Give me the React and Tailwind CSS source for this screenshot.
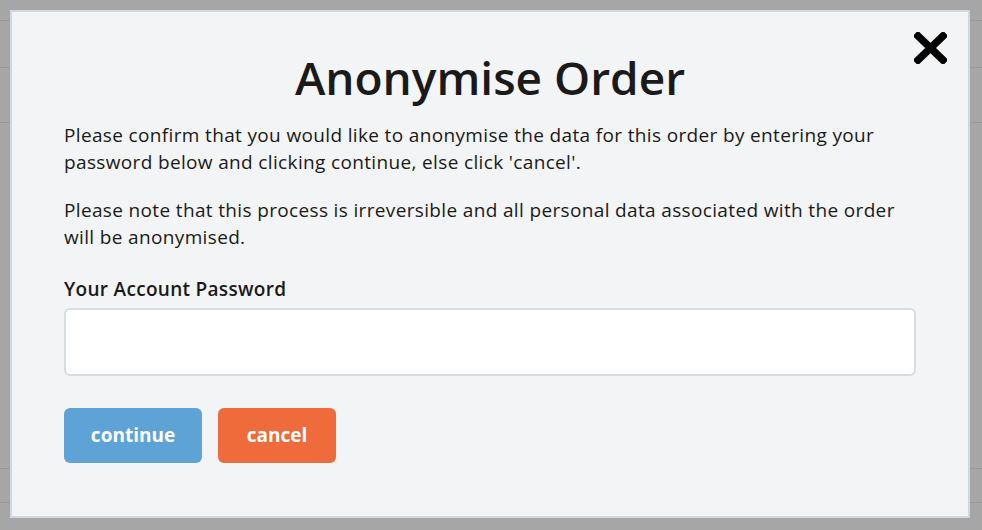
export default function App() {
  const font = { fontFamily: "'Open Sans', 'Noto Sans', sans-serif" };
  return (
    <div className="relative w-[982px] h-[530px] overflow-hidden bg-[#a6a6a6]" style={font}>
      <div className="flex flex-col">
        <div className="h-[21px] border-b border-[#999999]" />
        <div className="h-[47px] border-b border-[#999999]" />
        <div className="h-[55px] border-b border-[#999999]" />
        <div className="h-[346px] border-b border-[#999999]" />
        <div className="h-[34px] border-b border-[#999999]" />
      </div>
      <div className="absolute left-[10px] top-[10px] w-[960px] h-[508px] border-2 border-[#cfd8dc] bg-[#f3f4f6] px-[52px] text-[#1a1a1a]">
        <button className="absolute right-[21px] top-[20px] w-[33px] h-[32px]" aria-label="close">
          <svg viewBox="0 0 33 32" width="33" height="32">
            <path d="M4 4 L29 28 M29 4 L4 28" stroke="#000" strokeWidth="7.5" strokeLinecap="square" />
          </svg>
        </button>
        <h1 className="mt-[37px] text-center text-[46px] leading-[56px] font-semibold">Anonymise Order</h1>
        <p className="mt-[17px] text-[19px] leading-[27px] tracking-[0.35px] whitespace-nowrap">
          Please confirm that you would like to anonymise the data for this order by entering your<br />password below and clicking continue, else click 'cancel'.
        </p>
        <p className="mt-[21px] text-[19px] leading-[27px] tracking-[0.35px] whitespace-nowrap">
          Please note that this process is irreversible and all personal data associated with the order<br />will be anonymised.
        </p>
        <label className="block mt-[25px] text-[19px] leading-[27px] tracking-[0.3px] font-semibold">Your Account Password</label>
        <input type="password" className="block mt-[5px] w-full h-[68px] rounded-[6px] border-2 border-[#d5dde2] bg-white outline-none" />
        <div className="flex gap-[16px] mt-[32px]">
          <button className="h-[55px] w-[138px] rounded-[6px] bg-[#5ea3d5] text-white text-[19px] font-bold">continue</button>
          <button className="h-[55px] w-[118px] rounded-[6px] bg-[#ef6b3c] text-white text-[19px] font-bold">cancel</button>
        </div>
      </div>
    </div>
  );
}
